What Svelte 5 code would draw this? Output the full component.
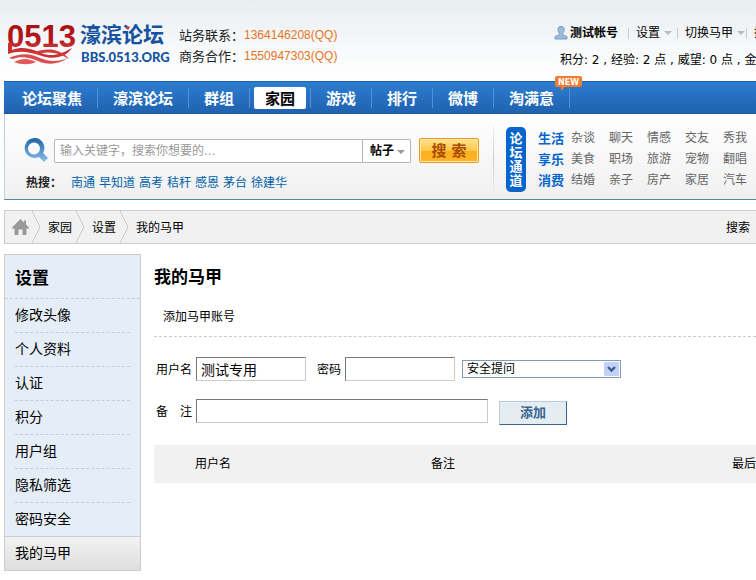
<script>
  const nav = ['论坛聚焦', '濠滨论坛', '群组', '家园', '游戏', '排行', '微博', '淘满意'];
  const hot = ['南通', '早知道', '高考', '秸秆', '感恩', '茅台', '徐建华'];
  const channels = [
    { name: '生活', items: ['杂谈', '聊天', '情感', '交友', '秀我'] },
    { name: '享乐', items: ['美食', '职场', '旅游', '宠物', '翻唱'] },
    { name: '消费', items: ['结婚', '亲子', '房产', '家居', '汽车'] }
  ];
  const crumbs = ['家园', '设置', '我的马甲'];
  const side = ['修改头像', '个人资料', '认证', '积分', '用户组', '隐私筛选', '密码安全', '我的马甲'];
  let username = $state('测试专用');
</script>

<div class="page">
  <header>
    <a class="logo" href="#home" aria-label="濠滨论坛">
      <svg width="168" height="46" viewBox="0 0 168 46">
        <defs>
          <linearGradient id="red" x1="0" y1="0" x2="0" y2="1">
            <stop offset="0" stop-color="#a30d10" />
            <stop offset="0.6" stop-color="#b51a1d" />
            <stop offset="1" stop-color="#dc4a4c" />
          </linearGradient>
        </defs>
        <text class="digits" x="3" y="26" fill="url(#red)">0513</text>
        <path d="M4 22H8V29C19 25 28 28 37 32C47 36 56 34 68 27C62 36 50 39 38 35C26 31 15 29 4 33Z" fill="#c9302f" />
        <path d="M5 37C18 31 27 33 36 37C46 41 54 41 64 37C54 44 43 44 34 40C25 36 16 35 9 38Z" fill="#dc4c4e" />
        <path d="M10 41C19 36 26 38 32 41C26 44 17 44 10 41Z" fill="#e05a5b" />
        <path d="M30 31C42 27 56 27 65 38C55 31 44 30 34 33Z" fill="#d23a3c" />
        <text class="brand" x="76" y="21">濠滨论坛</text>
        <text class="domain" x="77" y="41">BBS.0513.ORG</text>
        <path d="M122 6l2-1 2 1-2 3z" fill="#e23b32" />
      </svg>
    </a>
    <div class="contact">
      <div>站务联系：<span>1364146208(QQ)</span></div>
      <div>商务合作：<span>1550947303(QQ)</span></div>
    </div>
    <div class="user">
      <div class="menu">
        <svg width="14" height="14" viewBox="0 0 14 14"><path d="M4 3.500C4 1 5.300 .500 7 .500S10.200 1 10.200 3.500C10.200 5.500 9.500 6.500 8.800 7.500V8.800L13 10.500V13H1V10.500L5.300 8.800V7.500C4.500 6.500 4 5.500 4 3.500Z" fill="#9db9dc" stroke="#7f9fc8" /></svg>
        <a class="name" href="#me">测试帐号</a><i class="bar"></i>
        <a href="#settings">设置</a><i class="tri"></i><i class="bar"></i>
        <a href="#switch">切换马甲</a><i class="tri"></i><i class="bar tight"></i>
        <a href="#control">控制</a>
      </div>
      <div class="credits">积分: 2 , 经验: 2 点 , 威望: 0 点 , 金钱: 0</div>
    </div>
  </header>

  <nav>
    {#each nav as item, i}
      <a href="#nav{i}" class:active={item === '家园'}><span>{item}</span>
        {#if i === nav.length - 1}
          <svg class="new" width="27" height="16" viewBox="0 0 27 16">
            <path d="M2 0H25Q27 0 27 2V9Q27 11 25 11H10L6 15V11H2Q0 11 0 9V2Q0 0 2 0Z" fill="#f37b32" />
            <text x="3" y="9">NEW</text>
          </svg>
        {/if}
      </a>
    {/each}
  </nav>

  <section class="find">
    <div class="left">
      <form class="search" onsubmit={(e) => e.preventDefault()}>
        <svg class="glass" width="24" height="25" viewBox="0 0 24 25">
          <defs>
            <linearGradient id="lens" x1="0" y1="0" x2="0" y2="1">
              <stop offset="0" stop-color="#1c65a8" />
              <stop offset="1" stop-color="#8abfe9" />
            </linearGradient>
          </defs>
          <path d="M10 0A10 10 0 1 0 15 19L20 24L24 20L19 15A10 10 0 0 0 10 0ZM10 4.500A6 6 0 1 1 10 16.500A6 6 0 1 1 10 4.500Z" fill="url(#lens)" fill-rule="evenodd" />
        </svg>
        <input aria-label="搜索内容" placeholder="输入关键字，搜索你想要的..." />
        <div class="kind">
          <select aria-label="搜索类型"><option>帖子</option></select>
          <i class="tri dark"></i>
        </div>
        <button>搜 索</button>
      </form>
      <div class="hot">
        <strong>热搜：</strong>
        {#each hot as h}<a href="#{h}">{h}</a>{/each}
      </div>
    </div>
    <i class="divider"></i>
    <div class="pill">论坛通道</div>
    <div class="channels">
      {#each channels as c}
        <div class="row">
          <a class="lead" href="#{c.name}">{c.name}</a>
          {#each c.items as t}<a href="#{t}">{t}</a>{/each}
        </div>
      {/each}
    </div>
  </section>

  <div class="crumbs">
    <svg class="home" width="17" height="16" viewBox="0 0 17 16"><path d="M8.500 0L12 3.500V1.500H14V5.500L17 8.500V9.500H14.500V16H10.500V10.500H6.500V16H2.500V9.500H0V8.500Z" fill="#999" /></svg>
    {#each crumbs as c}
      <svg width="10" height="32" viewBox="0 0 10 32"><path d="M0 0L8 16L0 32" fill="none" stroke="#fff" stroke-width="2" /><path d="M0 0L8 16L0 32" fill="none" stroke="#bbb" /></svg>
      <a href="#{c}">{c}</a>
    {/each}
    <a class="end" href="#search">搜索</a>
  </div>

  <div class="body">
    <aside>
      <h2>设置</h2>
      <ul>
        {#each side as s}
          <li class:current={s === '我的马甲'}><a href="#{s}">{s}</a></li>
        {/each}
      </ul>
    </aside>
    <main>
      <h1>我的马甲</h1>
      <div class="sub">添加马甲账号</div>
      <form class="add" onsubmit={(e) => e.preventDefault()}>
        <div class="line">
          <label class="first" for="u">用户名</label>
          <input id="u" class="short" bind:value={username} />
          <label class="second" for="p">密码</label>
          <input id="p" class="short" type="password" />
          <div class="question">
            <select aria-label="安全提问"><option>安全提问</option></select>
            <svg width="15" height="14" viewBox="0 0 15 14"><rect width="15" height="14" rx="1" fill="#c1d1fa" /><path d="M4 5L7.500 8.500L11 5" fill="none" stroke="#435c89" stroke-width="2.400" /></svg>
          </div>
        </div>
        <div class="line">
          <label class="first" for="n">备　注</label>
          <input id="n" class="long" />
          <button>添加</button>
        </div>
      </form>
      <table>
        <thead><tr><th class="c1">用户名</th><th class="c2">备注</th><th>最后访问</th></tr></thead>
      </table>
    </main>
  </div>
</div>

<style>
  :global(body) { margin: 0; background: #fff; overflow-x: hidden; }
  .page {
    font: 12px/20px "DejaVu Sans", "Noto Sans CJK SC", sans-serif;
    color: #000;
    padding-left: 4px;
    overflow: hidden;
    white-space: nowrap;
    background: linear-gradient(#e9eef1, #fff 76px);
  }
  a { color: inherit; text-decoration: none; }
  input, select, button { font: inherit; color: inherit; box-sizing: border-box; margin: 0; border-radius: 0; }
  select { appearance: none; }

  header { display: flex; height: 81px; }
  .logo { width: 168px; margin-top: 21px; }
  .logo svg { display: block; }
  .digits { font: bold 31px "Liberation Sans", sans-serif; }
  .brand { font: bold 21px "Noto Sans CJK SC", sans-serif; fill: #1553a0; }
  .domain { font: 900 13px "Lato", sans-serif; fill: #1553a0; }
  .contact { margin: 25px 0 0 7px; font: 13px/21px "Liberation Sans", "Noto Sans CJK SC", sans-serif; color: #222; }
  .contact div { display: flex; }
  .contact span { font-size: 12px; color: #e8741c; }
  .user { margin-left: auto; width: 202px; padding-top: 23px; }
  .menu { display: flex; align-items: center; height: 20px; }
  .menu svg { flex: none; margin-right: 2px; }
  .menu a { flex: none; }
  .menu .name { font-weight: bold; width: 51px; }
  .bar { flex: none; width: 1px; height: 11px; background: #ccc; margin: 0 7px; }
  .tri { flex: none; border: 4px solid transparent; border-top-color: #bbb; border-bottom: 0; margin-left: 4px; }
  .menu .tri + .bar { margin-left: 5px; }
  .menu .tri + .tight { margin-left: 1px; }
  .credits { margin: 7px 0 0 6px; }

  nav {
    display: flex; height: 33px; box-sizing: border-box; padding-left: 3px;
    background: linear-gradient(#2d7dd0, #2062b0);
    border-top: 1px solid #1e62a8; border-bottom: 1px solid #1d59a0;
  }
  nav a {
    position: relative; display: flex; align-items: center; padding: 0 15px; color: #fff;
    font: bold 15px/22px "Noto Sans CJK SC", sans-serif;
    border-right: 1px solid transparent;
  }
  nav a::after { content: ""; position: absolute; right: -1px; top: 6px; width: 1px; height: 20px; background: #4e93da; }
  nav .active { padding: 0 4px; }
  nav .active span { background: #fff; color: #000; padding: 0 11px; border-radius: 2px; }
  .new { position: absolute; right: -13px; top: -6px; }
  .new text { font: bold 8px "DejaVu Sans", sans-serif; fill: #fff; }

  .find {
    display: flex; height: 86px; box-sizing: border-box;
    border-left: 1px solid #b6d2ec; border-bottom: 1px solid #5584b5;
    background: linear-gradient(#fff, #f0f0f0);
  }
  .left { padding: 24px 0 0 19px; width: 469px; }
  .search { display: flex; height: 25px; }
  .glass { flex: none; margin-right: 6px; }
  .search input {
    flex: 1; min-width: 0; height: 24px; margin-top: 1px; padding: 0 5px;
    border: 1px solid #b5b5b5; border-radius: 2px 0 0 2px; background: #fff; outline: 0;
  }
  .search input::placeholder { color: #999; opacity: 1; }
  .kind { position: relative; width: 48px; margin: 1px 8px 0 0; }
  .kind select {
    width: 48px; height: 24px; padding: 0 0 0 7px; font-weight: bold; background: #fff;
    border: 1px solid #b5b5b5; border-left: 0; border-radius: 0 2px 2px 0;
  }
  .dark { position: absolute; right: 6px; top: 11px; border-top-color: #999; pointer-events: none; }
  .search button {
    width: 60px; height: 25px; padding: 0; margin-right: 14px; color: #a84a00;
    font: bold 15px/20px "DejaVu Sans", "Noto Sans CJK SC", sans-serif;
    border: 1px solid #e59a20; border-radius: 2px;
    background: linear-gradient(#ffe18c, #ffc94a 50%, #ffae1a 50%, #ffb42c);
    box-shadow: inset 0 0 0 1px #ffe7a5;
  }
  .hot { display: flex; gap: 4px; margin-top: 10px; padding-left: 2px; color: #0060a8; }
  .hot strong { color: #222; width: 41px; }
  .divider { flex: none; width: 1px; margin: 12px 12px 4px 0; background: linear-gradient(#eee, #ccc, #eee); }
  .pill {
    flex: none; box-sizing: border-box; width: 20px; height: 65px; margin: 13px 12px 0 0; padding: 4px 3px;
    background: #0664cd; color: #fff; border-radius: 5px;
    font: bold 13px/14px "Noto Sans CJK SC", sans-serif; white-space: normal; word-break: break-all; text-align: center;
  }
  .channels { margin-top: 14px; color: #666; line-height: 21px; }
  .row { display: flex; gap: 14px; height: 21px; }
  .row .lead { width: 33px; margin-right: -14px; font-weight: bold; font-size: 13px; color: #0664cd; }

  .crumbs {
    display: flex; align-items: center; height: 32px; margin-top: 10px; padding-left: 7px;
    border: 1px solid #ccc; border-right: 0; background: #f1f1f1;
  }
  .crumbs a { margin: 1px 4px 0 6px; }
  .home { margin-right: 3px; }
  .crumbs .end { margin: 1px 6px 0 auto; }

  .body { display: flex; gap: 13px; margin-top: 10px; }
  aside { flex: none; box-sizing: border-box; width: 137px; border: 1px solid #ccc; background: #e5eef7; }
  h1, h2 { margin: 0; font: bold 17px/43px "Noto Sans CJK SC", sans-serif; }
  h2 { height: 43px; padding-left: 10px; border-bottom: 1px dashed #c4ccd4; }
  ul { list-style: none; margin: 0; padding: 0; }
  li { height: 33px; margin: 0 10px; border-bottom: 1px dashed #c4ccd4; font-size: 14px; line-height: 33px; }
  li:nth-last-child(2) { border-color: transparent; height: 32px; }
  li.current { margin: 0; padding-left: 10px; border-top: 1px solid #ccc; border-bottom: 0; background: linear-gradient(#f2f2f2, #dedede); }
  main { flex: 1; min-width: 0; overflow: hidden; }
  .sub { height: 39px; line-height: 40px; padding-left: 9px; border-bottom: 1px dashed #ccc; }
  .add { padding: 20px 0 22px 2px; display: grid; gap: 18px; }
  .line { display: flex; align-items: center; height: 24px; }
  .first { flex: none; width: 40px; padding-top: 2px; }
  .second { flex: none; width: 28px; margin-left: 11px; padding-top: 2px; }
  .line input {
    height: 24px; padding: 0 4px; font-size: 14px; background: #fff; outline: 0;
    border: 1px solid; border-color: #777 #ccc #ccc #777;
  }
  .short { width: 110px; }
  .long { width: 292px; }
  .question { position: relative; width: 159px; height: 18px; margin-left: 7px; }
  .question select { display: block; width: 100%; height: 18px; padding: 0 4px; line-height: 16px; background: #fff; border: 1px solid #7f9db9; }
  .question svg { position: absolute; right: 2px; top: 2px; pointer-events: none; }
  .line button {
    width: 68px; height: 24px; margin: 4px 0 0 11px; padding: 0; font-weight: bold; font-size: 13px; color: #36648f;
    background: #e5edf3; border: 1px solid; border-color: #b8ccdc #36648f #36648f #b8ccdc;
  }
  table { width: 100%; table-layout: fixed; border-spacing: 0; background: #f1f1f1; }
  th { height: 38px; padding: 0; text-align: left; font-weight: normal; overflow: hidden; }
  .c1 { width: 46%; box-sizing: border-box; padding-left: 41px; }
  .c2 { width: 50%; }
</style>
